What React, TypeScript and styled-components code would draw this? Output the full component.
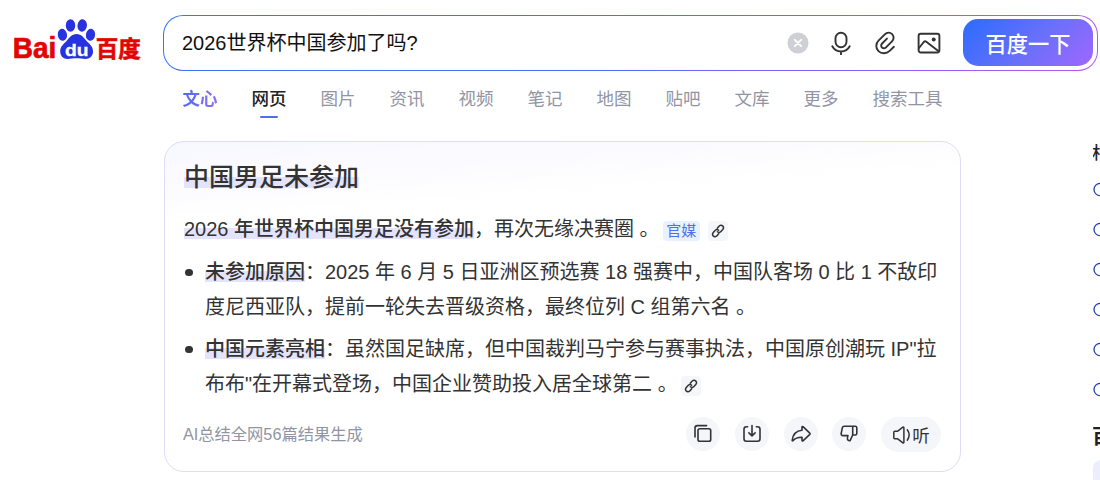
import type { ReactNode } from 'react';
import styled, { createGlobalStyle } from 'styled-components';

const TABS = ['网页', '图片', '资讯', '视频', '笔记', '地图', '贴吧', '文库', '更多', '搜索工具'];
const RELATED_COUNT = 6;

const BaiduLogo = () => (
  <LogoSvg viewBox="0 0 128 42" role="img" aria-label="百度">
    <g fill="#e10601" stroke="#e10601" fontWeight="700">
      <text x="-1.2" y="38.800" fontSize="29" textLength="43.500" lengthAdjust="spacingAndGlyphs" strokeWidth="0.700">
        Bai
      </text>
      <text x="81.800" y="37.700" fontSize="23" textLength="45" lengthAdjust="spacingAndGlyphs" strokeWidth="0.600">
        百度
      </text>
    </g>
    <g fill="#2932e1">
      <ellipse cx="48.400" cy="15.800" rx="4.600" ry="6" transform="rotate(-8 48.4 15.8)" />
      <ellipse cx="56.500" cy="6.500" rx="4.700" ry="6.200" />
      <ellipse cx="68.200" cy="6.500" rx="4.700" ry="6.200" transform="rotate(6 68.2 6.5)" />
      <ellipse cx="76.500" cy="15.800" rx="4.600" ry="6" transform="rotate(8 76.5 15.8)" />
      <path d="M62.600 15.100c4.800 0 7 3.700 10 7 3.200 3.400 6.400 5.500 6.400 10.400 0 4.600-3.200 7.400-7.500 7.400-3.200 0-5.600-.6-8.900-.6s-5.900.6-9 .6c-4.300 0-7.400-2.900-7.400-7.400 0-4.900 3.200-7 6.300-10.400 3-3.300 5.300-7 10.100-7z" />
    </g>
    <text
      x="51"
      y="36.800"
      fontSize="17"
      fontWeight="700"
      fill="#fff"
      stroke="#fff"
      strokeWidth="0.300"
      textLength="23.500"
      lengthAdjust="spacingAndGlyphs"
    >
      du
    </text>
  </LogoSvg>
);

const ClearIcon = () => (
  <Icon $size={22} viewBox="0 0 22 22">
    <circle cx="11" cy="11" r="10.500" fill="#cfd0d6" stroke="none" />
    <path d="m7.800 7.800 6.400 6.400m0-6.400-6.400 6.400" stroke="#fff" strokeWidth="1.900" />
  </Icon>
);

const MicIcon = () => (
  <Icon $size={24} viewBox="0 0 24 24" strokeWidth="1.900">
    <rect x="6.500" y="1.700" width="11" height="14.600" rx="5.500" />
    <path d="M3.300 15.300c1.800 3.400 4.900 5.200 8.700 5.200s6.900-1.800 8.700-5.200M12 20.500v3" />
  </Icon>
);

const ClipIcon = () => (
  <Icon $size={24} viewBox="0 0 24 24" strokeWidth="1.900">
    <path d="m20.900 15.800-4.200 4.100c-3.500 3.300-8.400 2.900-11.200.2-3-2.900-2.900-7.500 0-10.400l6.300-6.300c2.200-2.200 5.400-2.100 7.300-.2 2 2 2 5-.1 7.100l-6 6c-1.200 1.200-2.900 1.200-4 .2-1.100-1.100-1.100-2.800.1-4l4.900-4.900" />
  </Icon>
);

const ImageIcon = () => (
  <Icon $size={24} viewBox="0 0 24 24" strokeWidth="1.900">
    <rect x="1.600" y="2.700" width="20.800" height="18.800" rx="2.200" />
    <path d="m2 17 4.800-6c.8-.9 1.600-.9 2.500-.3l12.300 9.600" />
    <circle cx="16.700" cy="8.500" r="2" fill="currentColor" stroke="none" />
  </Icon>
);

const LinkIcon = () => (
  <Icon $size={14} viewBox="0 0 14 14" strokeWidth="1.500">
    <path d="M6.300 4.300 8 2.300c1-1.200 2.600-1.300 3.600-.4s1.100 2.400.1 3.600L10 7.400C9 8.600 7.400 8.700 6.400 7.800" />
    <path d="M7.700 9.700 6 11.700c-1 1.200-2.600 1.300-3.600.4s-1.100-2.400-.1-3.600L4 6.600C5 5.400 6.600 5.300 7.600 6.200" />
  </Icon>
);

const CopyIcon = () => (
  <Icon $size={20} viewBox="0 0 20 20" strokeWidth="1.600">
    <rect x="5" y="4.700" width="12.700" height="12.600" rx="1.800" />
    <path d="M2 13V4c0-1.500.9-2.400 2.400-2.400h9.200" />
  </Icon>
);

const SaveIcon = () => (
  <Icon $size={20} viewBox="0 0 20 20" strokeWidth="1.600">
    <path d="M5.600 2.800H4.400C2.800 2.800 2 3.600 2 5.200v9.600c0 1.600.8 2.400 2.400 2.400h11.200c1.600 0 2.400-.8 2.400-2.400V5.200c0-1.600-.8-2.400-2.400-2.400h-1.200" />
    <path d="M10 1.500v10.300M6.900 8.900l3.100 3 3.100-3" />
  </Icon>
);

const ShareIcon = () => (
  <Icon $size={20} viewBox="0 0 20 20" strokeWidth="1.600">
    <path d="M11 6.200V3.100c0-.6.500-.8 1-.4l6.800 6.500c.4.400.4.800 0 1.200L12 16.800c-.5.400-1 .2-1-.4v-3.100c-4.300-.1-6.900 1-9 3.400-.4.400-.9.200-.8-.4C1.900 10.600 4.900 6.700 11 6.200z" />
  </Icon>
);

const DislikeIcon = () => (
  <Icon $size={20} viewBox="0 0 20 20" strokeWidth="1.600">
    <path d="M13.700 11V2.200h2.500c1 0 1.600.6 1.600 1.600v5.600c0 1-.6 1.600-1.600 1.600h-2.500l-2.600 5.700c-1.800.2-2.900-.8-2.700-2.500l.5-2.600H4.100c-1.300 0-2.200-1-1.900-2.300l1.100-5.400c.2-1.100.9-1.700 2-1.700h8.400" />
  </Icon>
);

const SpeakerIcon = () => (
  <Icon $size={20} viewBox="0 0 20 20" strokeWidth="1.500">
    <path d="M2.800 6.200h2.900l5.200-4c.5-.4 1-.1 1 .5v14.600c0 .6-.5.900-1 .5l-5.200-4H2.800c-.6 0-1-.4-1-1V7.200c0-.6.4-1 1-1zM15.300 4.800c2.300 3.200 2.300 7.200 0 10.400" />
  </Icon>
);

const SearchIcon = () => (
  <Icon $size={16} viewBox="0 0 16 16" strokeWidth="1.300">
    <circle cx="7.200" cy="7.500" r="6.200" />
    <path d="m11.800 12 3 3" />
  </Icon>
);

interface ActionProps {
  label: string;
  children: ReactNode;
}
const Action = ({ label, children }: ActionProps) => <ActionButton aria-label={label}>{children}</ActionButton>;

const SearchHeader = () => (
  <Header>
    <BaiduLogo />
    <SearchBox>
      <SearchText>2026世界杯中国参加了吗?</SearchText>
      <SearchTools>
        <ClearIcon />
        <MicIcon />
        <ClipIcon />
        <ImageIcon />
      </SearchTools>
      <SearchButton>百度一下</SearchButton>
    </SearchBox>
  </Header>
);

const SummaryCard = () => (
  <Card>
    <CardTitle>
      <Mark $large>中国男足未参加</Mark>
    </CardTitle>
    <Lead>
      <Mark>2026 年世界杯中国男足没有参加</Mark>，再次无缘决赛圈 。
      <SourceTag>官媒</SourceTag>
      <LinkTag $gap={8}>
        <LinkIcon />
      </LinkTag>
    </Lead>
    <PointList>
      <Point>
        <Mark>未参加原因</Mark>：2025 年 6 月 5 日亚洲区预选赛 18 强赛中，中国队客场 0 比 1 不敌印
        <br />
        度尼西亚队，提前一轮失去晋级资格，最终位列 C 组第六名 。
      </Point>
      <Point>
        <Mark>中国元素亮相</Mark>：虽然国足缺席，但中国裁判马宁参与赛事执法，中国原创潮玩 IP"拉
        <br />
        布布"在开幕式登场，中国企业赞助投入居全球第二 。
        <LinkTag $gap={3}>
          <LinkIcon />
        </LinkTag>
      </Point>
    </PointList>
    <CardFooter>
      <FooterNote>AI总结全网56篇结果生成</FooterNote>
      <Actions>
        <Action label="复制">
          <CopyIcon />
        </Action>
        <Action label="保存">
          <SaveIcon />
        </Action>
        <Action label="分享">
          <ShareIcon />
        </Action>
        <Action label="不喜欢">
          <DislikeIcon />
        </Action>
        <ListenButton>
          <SpeakerIcon />听
        </ListenButton>
      </Actions>
    </CardFooter>
  </Card>
);

const Sidebar = () => (
  <Aside>
    <AsideTitle>相</AsideTitle>
    <RelatedList>
      {Array.from({ length: RELATED_COUNT }, (_, index) => (
        <RelatedItem key={index}>
          <SearchIcon />
        </RelatedItem>
      ))}
    </RelatedList>
    <HotTitle>百</HotTitle>
    <HotPanel />
  </Aside>
);

const App = () => (
  <>
    <GlobalStyle />
    <Page>
      <SearchHeader />
      <TabBar>
        <WenxinTab>文心</WenxinTab>
        {TABS.map((tab, index) => (
          <Tab key={tab} $active={index === 0}>
            {tab}
          </Tab>
        ))}
      </TabBar>
      <Content>
        <SummaryCard />
        <Sidebar />
      </Content>
    </Page>
  </>
);

export default App;

const GlobalStyle = createGlobalStyle`
  * {
    box-sizing: border-box;
  }
  body {
    margin: 0;
    overflow: hidden;
    background: #fff;
    color: #333;
    font-family: 'Liberation Sans', 'Noto Sans CJK SC', sans-serif;
  }
  button {
    padding: 0;
    border: 0;
    color: inherit;
    font-family: inherit;
  }
`;

const Page = styled.div`
  width: 1100px;
  height: 480px;
  overflow: hidden;
`;

const Icon = styled.svg<{ $size: number }>`
  display: block;
  flex: none;
  width: ${({ $size }) => $size}px;
  height: ${({ $size }) => $size}px;
  fill: none;
  stroke: currentColor;
  stroke-linecap: round;
  stroke-linejoin: round;
`;

const Header = styled.header`
  display: flex;
  align-items: flex-start;
  padding: 15px 2px 0 14px;
`;

const LogoSvg = styled.svg`
  flex: none;
  width: 128px;
  height: 42px;
  margin: 4px 21px 0 0;
`;

const SearchBox = styled.div`
  display: flex;
  flex: 1;
  align-items: center;
  height: 56px;
  padding: 0 4px 1px 18px;
  border: 1px solid transparent;
  border-radius: 20px;
  background:
    linear-gradient(#fff, #fff) padding-box,
    linear-gradient(100deg, #3b74f8 0%, #4e6ef2 45%, #a45cf5 90%, #b957e8 100%) border-box;
`;

const SearchText = styled.div`
  flex: 1;
  padding-top: 1px;
  color: #111;
  font-size: 20px;
  line-height: 30px;
`;

const SearchTools = styled.div`
  display: flex;
  align-items: center;
  gap: 20px;
  margin-right: 22.500px;
  color: #333;
`;

const SearchButton = styled.button`
  width: 130px;
  height: 47px;
  border-radius: 15px;
  background: linear-gradient(135deg, #2b6bff 0%, #6b70fa 55%, #a066ff 100%);
  color: #fff;
  font-size: 21.250px;
  font-weight: 500;
`;

const TabBar = styled.nav`
  display: flex;
  gap: 34px;
  height: 48px;
  padding: 13px 0 0 182.500px;
  font-size: 17.500px;
  line-height: 30px;
`;

const Tab = styled.span<{ $active: boolean }>`
  display: flex;
  flex-direction: column;
  align-items: center;
  color: ${({ $active }) => ($active ? '#222' : '#9195a3')};
  font-weight: ${({ $active }) => ($active ? 500 : 400)};

  &::after {
    content: '';
    flex: none;
    width: 18px;
    height: 2px;
    margin-top: 2px;
    border-radius: 1px;
    background: ${({ $active }) => ($active ? '#4e6ef2' : 'transparent')};
  }
`;

const WenxinTab = styled.span`
  height: 30px;
  background: linear-gradient(100deg, #466cf5, #9a6cf5);
  background-clip: text;
  color: transparent;
  font-weight: 700;
`;

const Content = styled.main`
  display: grid;
  grid-template-columns: 797px 7px;
  gap: 132px;
  align-items: start;
  padding: 22px 0 0 164px;
`;

const Card = styled.section`
  height: 331px;
  padding: 17px 19px 0;
  border: 1px solid #dddcfa;
  border-radius: 20px;
  background: linear-gradient(176deg, #f7f7ff 0, #fff 80px);
`;

const CardTitle = styled.h2`
  margin: 0;
  font-size: 25px;
  font-weight: 500;
  line-height: 36px;
`;

const Mark = styled.strong<{ $large?: boolean }>`
  background: linear-gradient(#e3e3fb, #e3e3fb) no-repeat 0 ${({ $large }) => ($large ? '14px' : '10px')} / 100% 11px;
  font-weight: 500;
`;

const Lead = styled.p`
  margin: 17px 0 8px;
  font-size: 20px;
  line-height: 35px;
  white-space: nowrap;
`;

const SourceTag = styled.span`
  display: inline-block;
  height: 20px;
  margin-left: 3px;
  padding: 0 3.500px;
  border-radius: 4px;
  background: #e8f1ff;
  color: #4e6ef2;
  font-size: 15px;
  line-height: 20px;
`;

const LinkTag = styled.span<{ $gap: number }>`
  display: inline-grid;
  place-items: center;
  width: 20px;
  height: 20px;
  margin-left: ${({ $gap }) => $gap}px;
  border-radius: 4px;
  background: #f5f6fa;
  vertical-align: -2px;
`;

const PointList = styled.ul`
  display: flex;
  flex-direction: column;
  gap: 7px;
  margin: 0;
  padding: 0;
  list-style: none;
`;

const Point = styled.li`
  padding-left: 21px;
  font-size: 20px;
  line-height: 35px;
  white-space: nowrap;

  &::before {
    content: '';
    display: inline-block;
    width: 7.500px;
    height: 7.500px;
    margin: 0 12.500px 0 -20px;
    border-radius: 50%;
    background: #333;
    vertical-align: 3px;
  }
`;

const CardFooter = styled.footer`
  display: flex;
  align-items: center;
  justify-content: space-between;
  margin-top: 15px;
`;

const FooterNote = styled.span`
  margin: -3px 0 0 -1px;
  color: #9195a3;
  font-size: 16.250px;
`;

const Actions = styled.div`
  display: flex;
  align-items: center;
  gap: 14.750px;
`;

const ActionButton = styled.button`
  display: grid;
  place-items: center;
  width: 34px;
  height: 34px;
  margin-bottom: 1px;
  border-radius: 50%;
  background: #f5f6fa;
`;

const ListenButton = styled.button`
  display: flex;
  align-items: center;
  justify-content: center;
  width: 60px;
  height: 35px;
  border-radius: 18px;
  background: #f5f6fa;
  font-size: 17.500px;
`;

const Aside = styled.aside`
  overflow: hidden;
`;

const AsideTitle = styled.h3`
  margin: 0 0 0 -1px;
  color: #222;
  font-size: 17.500px;
  font-weight: 500;
  line-height: 24px;
`;

const RelatedList = styled.ul`
  margin: 5px 0 0;
  padding: 0;
  list-style: none;
`;

const RelatedItem = styled.li`
  display: flex;
  align-items: center;
  height: 40px;
  color: #2440b3;
`;

const HotTitle = styled.h3`
  margin: 13px 0 0 -1px;
  color: #222;
  font-size: 20px;
  font-weight: 700;
  line-height: 28px;
`;

const HotPanel = styled.div`
  width: 200px;
  height: 30px;
  margin-top: 9px;
  border-radius: 8px;
  background: #eceeff;
`;
